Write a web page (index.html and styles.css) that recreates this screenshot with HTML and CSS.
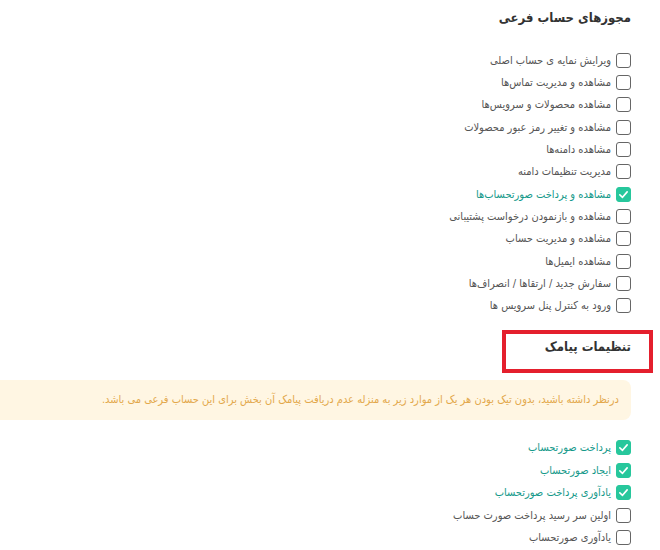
FILE: index.html
```html
<!DOCTYPE html>
<html lang="fa" dir="rtl">
<head>
  <meta charset="UTF-8" />
  <title>مجوزهای حساب فرعی</title>
  <link rel="stylesheet" href="styles.css">
</head>
<body>

  <div class="panel">
    <h2 class="title">مجوزهای حساب فرعی</h2>

    <div class="checklist perms">
      <label class="check-row"><span class="box"></span><span>ویرایش نمایه ی حساب اصلی</span></label>
      <label class="check-row"><span class="box"></span><span>مشاهده و مدیریت تماس‌ها</span></label>
      <label class="check-row"><span class="box"></span><span>مشاهده محصولات و سرویس‌ها</span></label>
      <label class="check-row"><span class="box"></span><span>مشاهده و تغییر رمز عبور محصولات</span></label>
      <label class="check-row"><span class="box"></span><span>مشاهده دامنه‌ها</span></label>
      <label class="check-row"><span class="box"></span><span>مدیریت تنظیمات دامنه</span></label>
      <label class="check-row checked"><span class="box"><svg viewBox="0 0 16 16"><polyline points="3.5,8.5 6.8,11.5 12.5,4.8"/></svg></span><span>مشاهده و پرداخت صورتحساب‌ها</span></label>
      <label class="check-row"><span class="box"></span><span>مشاهده و بازنمودن درخواست پشتیبانی</span></label>
      <label class="check-row"><span class="box"></span><span>مشاهده و مدیریت حساب</span></label>
      <label class="check-row"><span class="box"></span><span>مشاهده ایمیل‌ها</span></label>
      <label class="check-row"><span class="box"></span><span>سفارش جدید / ارتقاها / انصراف‌ها</span></label>
      <label class="check-row"><span class="box"></span><span>ورود به کنترل پنل سرویس ها</span></label>
    </div>

    <h2 class="title sms-title">
      تنظیمات پیامک
      <span class="highlight"></span>
    </h2>

    <div class="notice">درنظر داشته باشید، بدون تیک بودن هر یک از موارد زیر به منزله عدم دریافت پیامک آن بخش برای این حساب فرعی می باشد.</div>

    <div class="checklist sms">
      <label class="check-row checked"><span class="box"><svg viewBox="0 0 16 16"><polyline points="3.5,8.5 6.8,11.5 12.5,4.8"/></svg></span><span>پرداخت صورتحساب</span></label>
      <label class="check-row checked"><span class="box"><svg viewBox="0 0 16 16"><polyline points="3.5,8.5 6.8,11.5 12.5,4.8"/></svg></span><span>ایجاد صورتحساب</span></label>
      <label class="check-row checked"><span class="box"><svg viewBox="0 0 16 16"><polyline points="3.5,8.5 6.8,11.5 12.5,4.8"/></svg></span><span>یادآوری پرداخت صورتحساب</span></label>
      <label class="check-row"><span class="box"></span><span>اولین سر رسید پرداخت صورت حساب</span></label>
      <label class="check-row"><span class="box"></span><span>یادآوری صورتحساب</span></label>
    </div>
  </div>

</body>
</html>
```

FILE: styles.css
```css
body {
  margin: 0;
  direction: rtl;
  font-family: "DejaVu Sans Condensed", "DejaVu Sans", sans-serif;
  background: #ffffff;
  color: #555555;
  overflow: hidden;
}

.panel {
  padding: 8px 29px 0 0;
}

.title {
  margin: 0;
  font-size: 13px;
  line-height: 20px;
  font-weight: bold;
  color: #333333;
}

.checklist {
  display: flex;
  flex-direction: column;
  gap: 7.36px;
}

.perms {
  margin-top: 24.5px;
}

.check-row {
  display: flex;
  align-items: center;
  gap: 5px;
  height: 15px;
  font-size: 11px;
  color: #555555;
  white-space: nowrap;
}

.box {
  flex: none;
  width: 15px;
  height: 15px;
  box-sizing: border-box;
  border: 1px solid #666666;
  border-radius: 3px;
  display: flex;
  align-items: center;
  justify-content: center;
}

.box svg {
  width: 13px;
  height: 13px;
  fill: none;
  stroke: #ffffff;
  stroke-width: 2;
  stroke-linecap: round;
  stroke-linejoin: round;
}

.checked {
  color: #15998a;
}

.checked .box {
  background: #27c79c;
  border-color: #27c79c;
}

.sms-title {
  position: relative;
  margin-top: 23.5px;
}

/* red annotation frame around the sms heading */
.highlight {
  position: absolute;
  top: -7px;
  right: -22px;
  width: 151px;
  height: 43px;
  box-sizing: border-box;
  border: 4px solid #e41f2d;
}

.notice {
  margin-top: 23px;
  height: 40px;
  display: flex;
  align-items: center;
  padding-right: 12px;
  background: #fff6e3;
  border-radius: 0 8px 8px 0;
  color: #e3a84b;
  font-size: 11px;
  white-space: nowrap;
  overflow: hidden;
}

.sms {
  margin-top: 20.5px;
}
```
